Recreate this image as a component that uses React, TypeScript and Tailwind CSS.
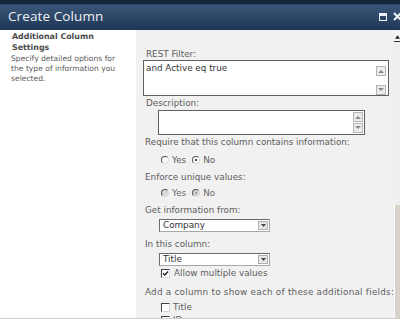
import React from "react";

const label = "text-[8.8px] leading-[12px] text-[#5e5e5e] font-['DejaVu_Sans',sans-serif] whitespace-nowrap";

const ScrollBtn = ({ up }: { up?: boolean }) => (
  <div className="w-[10px] h-[10px] bg-[#ececec] border border-[#b5b5b5] flex items-center justify-center">
    <svg width="6" height="4" viewBox="0 0 6 4">
      {up ? <path d="M0 4 L3 1 L6 4 Z" fill="#8a8a8a" /> : <path d="M0 0 L3 3 L6 0 Z" fill="#8a8a8a" />}
    </svg>
  </div>
);

const Radio = ({ checked, disabled }: { checked?: boolean; disabled?: boolean }) => (
  <div
    className={`w-[8px] h-[8px] rounded-full border border-t-[#555] border-l-[#555] border-r-[#dcdcdc] border-b-[#dcdcdc] flex items-center justify-center ${
      disabled ? "bg-[#d8d8d8]" : "bg-white"
    }`}
  >
    {checked && <div className={`w-[2px] h-[2px] rounded-full ${disabled ? "bg-[#888]" : "bg-black"}`} />}
  </div>
);

const Checkbox = ({ checked }: { checked?: boolean }) => (
  <div className="w-[9px] h-[9px] bg-white border border-t-[#404040] border-l-[#404040] border-r-[#d6d6d6] border-b-[#d6d6d6] flex items-center justify-center">
    {checked && (
      <svg width="7" height="7" viewBox="0 0 7 7">
        <path d="M1 3.2 L2.8 5 L6 1.5" stroke="#222" strokeWidth="1.4" fill="none" />
      </svg>
    )}
  </div>
);

const Select = ({ value }: { value: string }) => (
  <div className="ml-[13px] w-[111px] h-[13px] bg-white border border-[#6b6b6b] border-b-[#a8a8a8] border-r-[#a8a8a8] flex items-center justify-between pl-[3px] pr-[1px]">
    <span className="text-[8.8px] leading-[11px] text-[#333] font-['DejaVu_Sans',sans-serif]">{value}</span>
    <div className="w-[10px] h-[9px] bg-[#e6e6e6] border border-[#b0b0b0] flex items-center justify-center">
      <svg width="5" height="3" viewBox="0 0 5 3">
        <path d="M0 0 L2.5 3 L5 0 Z" fill="#444" />
      </svg>
    </div>
  </div>
);

export default function App() {
  return (
    <div className="w-[400px] h-[321px] overflow-hidden bg-white flex flex-col">
      {/* top strip */}
      <div className="h-[5px] bg-[#16253a] border-b border-[#2a4260] shrink-0" />
      {/* title bar */}
      <div className="h-[25px] shrink-0 bg-gradient-to-b from-[#3a5678] to-[#1f3756] flex items-center justify-between pl-[8px]">
        <span className="text-[13.5px] text-[#eef2f7] font-['Open_Sans',sans-serif] tracking-[0.1px] -mt-[2px]">
          Create Column
        </span>
        <div className="flex items-center gap-[6px] -mr-[2px] -mt-[2px]">
          <div className="w-[8px] h-[8px] border border-t-[3px] border-[#eef2f7]" />
          <svg width="9" height="9" viewBox="0 0 9 9">
            <path d="M1 1 L8 8 M8 1 L1 8" stroke="#eef2f7" strokeWidth="2.2" />
          </svg>
        </div>
      </div>

      {/* body */}
      <div className="h-[288px] flex shrink-0 overflow-hidden">
        {/* left description */}
        <div className="w-[136px] shrink-0 bg-white pl-[12px] pt-[2px]">
          <div className="text-[7.9px] leading-[10.5px] font-bold text-[#4a4a4a] font-['DejaVu_Sans',sans-serif] whitespace-nowrap">
            Additional Column
            <br />
            Settings
          </div>
          <div className="mt-[1px] -ml-[1px] text-[7.6px] leading-[10px] text-[#5c5c5c] font-['DejaVu_Sans',sans-serif] whitespace-nowrap">
            Specify detailed options for
            <br />
            the type of information you
            <br />
            selected.
          </div>
        </div>

        {/* right form */}
        <div className="flex-1 bg-[#f1f1f1] pl-[10px] pt-[18px]">
          <div className={label}>REST Filter:</div>
          <div className="-ml-[3px] w-[246px] h-[36px] bg-white border border-[#606060] flex justify-between pl-[2px] pr-[2px] pt-[1px]">
            <span className="text-[8.8px] leading-[12px] text-[#333] font-['DejaVu_Sans',sans-serif]">and Active eq true</span>
            <div className="flex flex-col justify-between pt-[4px]">
              <ScrollBtn up />
              <ScrollBtn />
            </div>
          </div>

          <div className={`${label} mt-[1px]`}>Description:</div>
          <div className="ml-[12px] mt-[1px] w-[207px] h-[25px] bg-white border border-[#606060] flex justify-end pr-[1px] pt-[1px]">
            <div className="flex flex-col gap-[1px]">
              <ScrollBtn up />
              <ScrollBtn />
            </div>
          </div>

          <div className={`${label} mt-[1px] -ml-[1px]`}>Require that this column contains information:</div>
          <div className="mt-[6px] ml-[15px] flex items-center h-[12px]">
            <Radio />
            <span className={`${label} ml-[3px]`}>Yes</span>
            <div className="ml-[6px]">
              <Radio checked />
            </div>
            <span className={`${label} ml-[3px]`}>No</span>
          </div>

          <div className={`${label} mt-[5px] -ml-[1px]`}>Enforce unique values:</div>
          <div className="mt-[4px] ml-[15px] flex items-center h-[12px]">
            <Radio disabled />
            <span className={`${label} ml-[3px] text-[#6a6a6a]`}>Yes</span>
            <div className="ml-[6px]">
              <Radio checked disabled />
            </div>
            <span className={`${label} ml-[3px] text-[#6a6a6a]`}>No</span>
          </div>

          <div className={`${label} mt-[5px] -ml-[1px]`}>Get information from:</div>
          <div className="mt-[3px]">
            <Select value="Company" />
          </div>

          <div className={`${label} mt-[6px] -ml-[1px]`}>In this column:</div>
          <div className="mt-[3px]">
            <Select value="Title" />
          </div>

          <div className="mt-[1px] ml-[15px] flex items-center h-[12px]">
            <Checkbox checked />
            <span className={`${label} ml-[4px]`}>Allow multiple values</span>
          </div>

          <div className={`${label} mt-[7px] -ml-[1px] tracking-[0.25px]`}>Add a column to show each of these additional fields:</div>
          <div className="mt-[3px] ml-[15px] flex items-center h-[12px]">
            <Checkbox />
            <span className={`${label} ml-[3px]`}>Title</span>
          </div>
          <div className="mt-[1px] ml-[15px] flex items-center h-[12px]">
            <Checkbox />
            <span className={`${label} ml-[3px]`}>ID</span>
          </div>
        </div>

        {/* scrollbar (cut off) */}
        <div className="w-[6px] shrink-0 flex flex-col bg-[#f4f4f4]">
          <div className="h-[12px] border-b border-[#333] flex items-center pl-[1px] pt-[2px]">
            <svg width="6" height="4" viewBox="0 0 6 4">
              <path d="M0 4 L3 0 L6 4 Z" fill="#222" />
            </svg>
          </div>
          <div className="h-[163px] bg-[#efefef] bg-[radial-gradient(#d8d8d8_0.6px,transparent_0.7px)] bg-[length:2px_2px]" />
          <div className="flex-1 bg-[#d8d4cc] border-l border-white" />
        </div>
      </div>

      {/* bottom */}
      <div className="flex-1 bg-white border-t border-[#cfcfcf]" />
    </div>
  );
}
